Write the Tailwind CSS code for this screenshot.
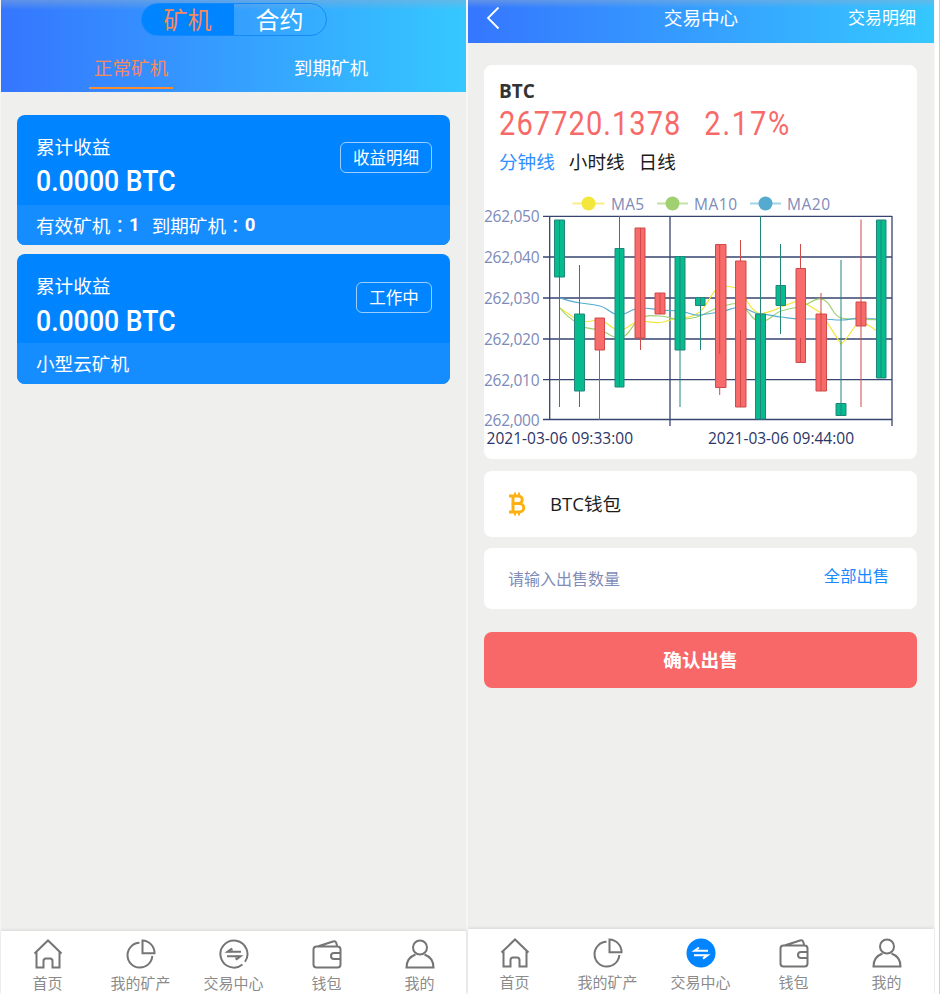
<!DOCTYPE html>
<html lang="zh-CN">
<head>
  <meta charset="UTF-8" />
  <meta name="viewport" content="width=device-width, initial-scale=1.0"/>
  <title>交易中心</title>
  <script src="https://cdn.jsdelivr.net/npm/@tailwindcss/browser@4"></script>
</head>
<body class="bg-[#f6f6f6] h-[994px] overflow-hidden font-['Open_Sans','Noto_Sans_CJK_SC',sans-serif]">

  <!-- Shared tab bar icons -->
  <svg class="hidden">
    <symbol id="i-home" viewBox="0 0 30 30">
      <path d="M1.500 14.500L15 1.500l13.500 13M3.500 13v15.500h7v-6.500a2.500 2.500 0 0 1 2.500-2.500h4a2.500 2.500 0 0 1 2.500 2.500v6.500h7V13"/>
    </symbol>
    <symbol id="i-pie" viewBox="0 0 30 30">
      <path d="M13.500 3.800a12.400 12.400 0 1 0 12.800 13.200"/>
      <path d="M16.500 1.500v12.700H28.500A12.600 12.600 0 0 0 16.500 1.500z"/>
    </symbol>
    <symbol id="i-trade" viewBox="0 0 30 30">
      <path d="M23.500 25.500A13.500 13.500 0 1 1 26 22.800"/>
      <path d="M22 12.800H8.500l4.500-3.300M8 17.300h13.500l-4.500 3.300"/>
      <path d="M8.500 12.800l4.500-3.300v3.300zM21.500 17.300l-4.500 3.300v-3.300z" stroke-width="1"/>
    </symbol>
    <symbol id="i-wallet" viewBox="0 0 30 30">
      <path d="M28.500 14v-3.500a3 3 0 0 0-3-3h-21a3 3 0 0 0-3 3v15a3 3 0 0 0 3 3h21a3 3 0 0 0 3-3V20M28.500 14H22a3 3 0 0 0 0 6h6.500zM5.500 7.500l15.500-5q2.500-.8 3.300 1.500l1 3.500"/>
    </symbol>
    <symbol id="i-user" viewBox="0 0 30 30">
      <circle cx="15" cy="8.500" r="7"/>
      <path d="M10.500 15.500C5 17.500 1.500 22 1.500 28.500h27c0-6.500-3.500-11-9-13"/>
    </symbol>
  </svg>

  <div class="flex h-[994px] pl-px">

    <!-- Miner screen -->
    <section class="w-[465px] flex flex-col bg-[#efefed]">
      <header class="h-[92px] bg-[linear-gradient(to_bottom,#8cacd080,transparent_10px),linear-gradient(to_right,#3576ff,#35c8ff)]">
        <div class="flex justify-center pt-[3px]">
          <div class="flex w-[186px] h-[33px] rounded-full border border-[#1689f8] overflow-hidden text-[24px] leading-[32px] text-center">
            <div class="w-[92px] bg-[#0084ff] text-[#f58a5c]">矿机</div>
            <div class="w-[92px] text-white">合约</div>
          </div>
        </div>
        <div class="flex pl-[88px] pt-[16px] text-[18.600px] leading-[32px] text-center">
          <div class="w-[84px] h-[37px] border-b-2 border-[#f98d35] text-[#f58a5c]">正常矿机</div>
          <div class="w-[84px] ml-[116px] text-white">到期矿机</div>
        </div>
      </header>

      <main class="flex-1 px-4 pt-[23px] space-y-[9px] text-white text-[18.600px]">
        <div class="w-[433px] h-[130px] rounded-lg overflow-hidden bg-[#0084ff]">
          <div class="h-[90px] flex justify-between pl-[19px] pr-[18px]">
            <div class="pt-[19px]">
              <div class="leading-[26px]">累计收益</div>
              <div class="font-['Roboto'] font-medium text-[29px] leading-[42px] origin-left scale-x-[.92] whitespace-nowrap">0.0000 BTC</div>
            </div>
            <div class="mt-[27px] w-[92px] h-[31px] rounded-md border border-white/60 text-[16.500px] leading-[30px] text-center">收益明细</div>
          </div>
          <div class="h-10 bg-[#158dff] pl-[19px] leading-[39px] flex">
            <span>有效矿机<span lang="zh-TW" class="font-['Noto_Sans_CJK_TC']">：</span></span><b class="font-['Roboto'] font-bold leading-[40px]">1</b>
            <span class="ml-3">到期矿机<span lang="zh-TW" class="font-['Noto_Sans_CJK_TC']">：</span></span><b class="font-['Roboto'] font-bold leading-[40px]">0</b>
          </div>
        </div>
        <div class="w-[433px] h-[130px] rounded-lg overflow-hidden bg-[#0084ff]">
          <div class="h-[89px] flex justify-between pl-[19px] pr-[18px]">
            <div class="pt-[19px]">
              <div class="leading-[26px]">累计收益</div>
              <div class="font-['Roboto'] font-medium text-[29px] leading-[44px] origin-left scale-x-[.92] whitespace-nowrap">0.0000 BTC</div>
            </div>
            <div class="mt-[28px] w-[76px] h-[31px] rounded-md border border-white/60 text-[16.500px] leading-[30px] text-center">工作中</div>
          </div>
          <div class="h-[41px] bg-[#158dff] pl-[19px] leading-[41px]">小型云矿机</div>
        </div>
      </main>

      <nav class="h-[63px] bg-white shadow-[0_-1px_3px_#0000001a] grid grid-cols-5 pt-2 text-[15px] leading-[28px] text-[#8b8b8b] whitespace-nowrap">
        <div class="flex flex-col items-center">
          <svg class="size-[30px] fill-none stroke-[#757575] stroke-2"><use href="#i-home"/></svg>
          <span>首页</span>
        </div>
        <div class="flex flex-col items-center">
          <svg class="size-[30px] fill-none stroke-[#757575] stroke-2"><use href="#i-pie"/></svg>
          <span>我的矿产</span>
        </div>
        <div class="flex flex-col items-center">
          <svg class="size-[30px] fill-none stroke-[#757575] stroke-2"><use href="#i-trade"/></svg>
          <span>交易中心</span>
        </div>
        <div class="flex flex-col items-center">
          <svg class="size-[30px] fill-none stroke-[#757575] stroke-2"><use href="#i-wallet"/></svg>
          <span>钱包</span>
        </div>
        <div class="flex flex-col items-center">
          <svg class="size-[30px] fill-none stroke-[#757575] stroke-2"><use href="#i-user"/></svg>
          <span>我的</span>
        </div>
      </nav>
    </section>

    <!-- Trade screen -->
    <section class="ml-[2px] w-[466px] flex flex-col bg-[#efefed]">
      <header class="h-[43px] flex items-start justify-between pl-[18px] pr-[18px] text-white bg-[linear-gradient(to_bottom,#8cacd080,transparent_8px),linear-gradient(to_right,#3576ff,#35c8ff)]">
        <svg class="w-[68px] h-[36px] fill-none stroke-white stroke-[1.800]"><path d="M12.500 7.500L2 18l10.500 10.500"/></svg>
        <h1 class="text-[18.600px] leading-[36px]">交易中心</h1>
        <span class="text-[17px] leading-[35px]">交易明细</span>
      </header>

      <main class="flex-1 pl-[16px]">
        <div class="mt-[22px] w-[433px] h-[394px] rounded-lg bg-white overflow-hidden">
          <div class="h-[125px] pl-[15px] pt-[13px]">
            <div class="text-[19px] leading-[26px] font-bold text-[#333]">BTC</div>
            <div class="flex font-['Roboto'] text-[33px] leading-[40px] tracking-[1.200px] text-[#f86a69] origin-left scale-x-[.88]">
              <span>267720.1378</span><span class="ml-[26px] tracking-[2px]">2.17%</span>
            </div>
            <div class="flex gap-[14px] text-[18.600px] leading-[36px] text-[#1c1c1c]">
              <span class="text-[#2e8fff]">分钟线</span><span>小时线</span><span>日线</span>
            </div>
          </div>

          <!-- Candlestick chart -->
          <svg class="w-[433px] h-[268px]" viewBox="484 190 433 268">
            <!-- legend -->
            <g stroke-width="2">
              <path d="M572.500 203.500h32" stroke="#f7ee8a"/><circle cx="588.500" cy="203.500" r="7" fill="#f4e73c"/>
              <path d="M657 203.500h31" stroke="#c4e2a8"/><circle cx="672.500" cy="203.500" r="7" fill="#a0d070"/>
              <path d="M750 203.500h31" stroke="#a0d4e6"/><circle cx="765.500" cy="203.500" r="7" fill="#54abcf"/>
            </g>
            <g fill="#7d8bb8" font-size="15.500">
              <text x="611" y="209.500" textLength="33">MA5</text>
              <text x="694" y="209.500" textLength="43">MA10</text>
              <text x="787" y="209.500" textLength="43">MA20</text>
              <text x="484" y="222" textLength="55.500">262,050</text>
              <text x="484" y="263" textLength="55.500">262,040</text>
              <text x="484" y="304" textLength="55.500">262,030</text>
              <text x="484" y="345" textLength="55.500">262,020</text>
              <text x="484" y="385.500" textLength="55.500">262,010</text>
              <text x="484" y="426" textLength="55.500">262,000</text>
            </g>
            <g fill="#2b3566" font-size="15.500">
              <text x="486.500" y="443.500" textLength="146.500">2021-03-06 09:33:00</text>
              <text x="708" y="443.500" textLength="146">2021-03-06 09:44:00</text>
            </g>
            <!-- grid -->
            <path d="M543 216.300h349M543 257h349M543 298h349M543 339h349M543 379.700h349M543 419.500h349M549.700 216v204M670 216v210M892 216v210" fill="none" stroke="#37446f" stroke-width="1.300"/>
            <!-- moving averages -->
            <g fill="none" stroke-width="1.200">
              <path stroke="#f3e63a" d="M560 308L580 322Q591 322 599.500 319C607 321 611 330 619.500 330S632 321 640 321 652 323 660 322.500 672 318 680 318 694 316 700 312C710 302 712 290 720 286Q734 286 740 290C748 302 752 312 760.500 314Q772 312 781 307L800 300 821 313 841 344C850 337 854 324 861 321Q871 326 881 334"/>
              <path stroke="#a0d070" d="M560 308C566 316 572 320 580 325S592 328 600 330 611 338 619.500 338 632 324 640 319 652 316 660 316 673 320 680 319.500 694 318 700 316 712 309 720 307 734 302 740 304C748 308 752 322 760.500 322S774 313 781 311 792 308 800 307 813 298 821 299C831 300 832 316 841 318S871 319 881 320"/>
              <path stroke="#54abcf" d="M560 298C567 300 573 302 580 303S592 304 600 306 612 315 619.500 315 632 308 640 308 652 309 660 310 672 310 680 311 693 316 700 315 713 313 720 312 733 307 740 307 753 314 760.500 314 773 316 781 317 792 319 800 319 813 319 821 319 833 320 841 320 852 318 861 318 871 318 881 319.500"/>
            </g>
            <!-- falling candles -->
            <g fill="#06bb8d" stroke="#22857c">
              <path d="M554.500 220h10v57h-10zM574.500 314h10v77h-10zM615 248.500h9v138.500h-9zM675 256.500h10v93.500h-10zM695.500 297.500h9.500v8h-9.500zM755.500 314h10v105h-10zM776 285.500h9.500v20h-9.500zM836 403.500h10v12h-10zM876.500 220h9.500v158h-9.500z"/>
              <path d="M559.500 220v187M579.500 265v49M579.500 391v16M619.500 216v171M680 256v151M700.500 297v53M760.500 216v203M780.500 244v90M841 260v155M881 220v158"/>
            </g>
            <!-- rising candles -->
            <g fill="#f86b6b" stroke="#cf4a49">
              <path d="M595 318h9.500v32h-9.500zM635 228h10v110h-10zM655 293h10v21h-10zM715.500 244.500h10.500v143h-10.500zM735.500 261h10.500v146h-10.500zM796 268.500h9.500v94h-9.500zM816 314h10.500v77h-10.500zM856 302h10v24h-10z"/>
              <path d="M599.500 350v70M640.500 228v122M660 293v21M719.700 244v110M719.700 387v8M740.500 240v21M740.500 330v77M800.500 244v24M800.500 338v24M821 293v98M861 219.500v187.500"/>
            </g>
          </svg>
        </div>

        <div class="mt-3 w-[433px] h-[66px] rounded-lg bg-white flex items-center pl-6">
          <svg class="w-[18px] h-[24px] fill-none stroke-[#fdb011] stroke-[3]">
            <path d="M5 4v16M1 4h9.500a3.700 3.700 0 0 1 0 7.500H5h6.500a4.200 4.200 0 0 1 0 8.500H1"/>
            <path class="stroke-2" d="M7 .5v3M11 .5v3M7 20.500v3M11 20.500v3"/>
          </svg>
          <span class="ml-[24px] text-[18.600px] text-[#1c1c1c]">BTC钱包</span>
        </div>

        <div class="mt-[11px] w-[433px] h-[61px] rounded-lg bg-white flex justify-between pl-6 pr-[28px]">
          <span class="text-[16px] leading-[62px] text-[#7f8db8]">请输入出售数量</span>
          <span class="text-[16.300px] leading-[57px] text-[#1989ff]">全部出售</span>
        </div>

        <div class="mt-[23px] w-[433px] h-[56px] rounded-lg bg-[#f86868] text-white text-[18.600px] leading-[55px] font-bold text-center">确认出售</div>
      </main>

      <nav class="h-[65px] bg-white shadow-[0_-1px_3px_#0000001a] grid grid-cols-5 pt-[9px] pr-px text-[15px] leading-[28px] text-[#8b8b8b] whitespace-nowrap">
        <div class="flex flex-col items-center">
          <svg class="size-[30px] fill-none stroke-[#757575] stroke-2"><use href="#i-home"/></svg>
          <span>首页</span>
        </div>
        <div class="flex flex-col items-center">
          <svg class="size-[30px] fill-none stroke-[#757575] stroke-2"><use href="#i-pie"/></svg>
          <span>我的矿产</span>
        </div>
        <div class="flex flex-col items-center">
          <svg class="size-[30px] fill-none stroke-white stroke-2">
            <circle cx="15" cy="15" r="14.500" class="fill-[#0084ff] stroke-none"/>
            <path d="M22 12.800H8.500l4.500-3.300M8 17.300h13.500l-4.500 3.300"/>
          </svg>
          <span>交易中心</span>
        </div>
        <div class="flex flex-col items-center">
          <svg class="size-[30px] fill-none stroke-[#757575] stroke-2"><use href="#i-wallet"/></svg>
          <span>钱包</span>
        </div>
        <div class="flex flex-col items-center">
          <svg class="size-[30px] fill-none stroke-[#757575] stroke-2"><use href="#i-user"/></svg>
          <span>我的</span>
        </div>
      </nav>
    </section>

    <div class="flex-1 ml-px bg-white border-r border-[#cfcfcf]"></div>
  </div>
</body>
</html>
